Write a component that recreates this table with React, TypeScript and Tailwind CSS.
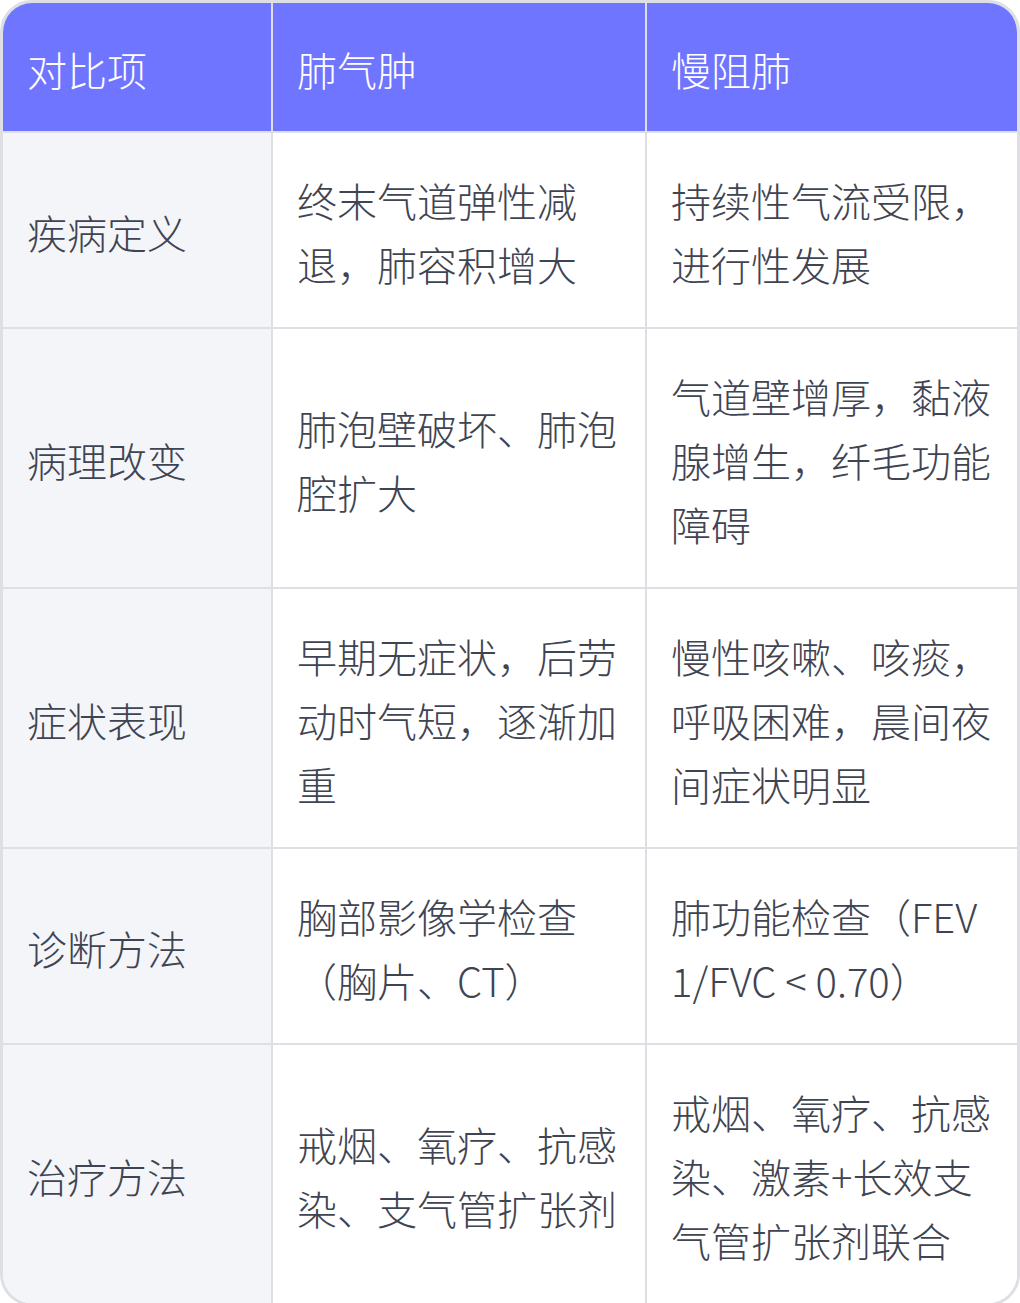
import React from 'react';

const rows = [
  {
    label: '疾病定义',
    a: '终末气道弹性减退，肺容积增大',
    b: '持续性气流受限，进行性发展',
  },
  {
    label: '病理改变',
    a: '肺泡壁破坏、肺泡腔扩大',
    b: '气道壁增厚，黏液腺增生，纤毛功能障碍',
  },
  {
    label: '症状表现',
    a: '早期无症状，后劳动时气短，逐渐加重',
    b: '慢性咳嗽、咳痰，呼吸困难，晨间夜间症状明显',
  },
  {
    label: '诊断方法',
    a: '胸部影像学检查（胸片、CT）',
    b: '肺功能检查（FEV1/FVC < 0.70）',
  },
  {
    label: '治疗方法',
    a: '戒烟、氧疗、抗感染、支气管扩张剂',
    b: '戒烟、氧疗、抗感染、激素+长效支气管扩张剂联合',
  },
];

const App: React.FC = () => {
  return (
    <div className="w-[1020px] h-[1303px] bg-white">
      <div
        className="grid grid-cols-[270px_374px_1fr] border-[3px] border-[#dedfe4] rounded-[32px] overflow-hidden text-[40px] leading-[64px] font-light"
        style={{ fontFamily: '"Noto Sans CJK SC", "Noto Sans", sans-serif' }}
      >
        {/* Header */}
        <div className="bg-[#7075ff] text-white px-6 pt-[34px] pb-[30px] border-r-2 border-b-2 border-[#dedfe4]">对比项</div>
        <div className="bg-[#7075ff] text-white px-6 pt-[34px] pb-[30px] border-r-2 border-b-2 border-[#dedfe4]">肺气肿</div>
        <div className="bg-[#7075ff] text-white px-6 pt-[34px] pb-[30px] border-b-2 border-[#dedfe4]">慢阻肺</div>

        {rows.map((row, i) => {
          const last = i === rows.length - 1;
          return (
            <React.Fragment key={row.label}>
              <div
                className={`bg-[#f4f5f9] text-[#3f4452] px-6 pt-[35px] pb-[31px] flex items-center border-r-2 border-[#dedfe4] ${last ? '' : 'border-b-2'}`}
              >
                {row.label}
              </div>
              <div
                className={`bg-white text-[#3f4452] px-6 pt-[35px] pb-[31px] flex items-center border-r-2 border-[#dedfe4] ${last ? '' : 'border-b-2'}`}
              >
                <span>{row.a}</span>
              </div>
              <div
                className={`bg-white text-[#3f4452] px-6 pt-[35px] pb-[31px] flex items-center break-all border-[#dedfe4] ${last ? '' : 'border-b-2'}`}
              >
                <span>{row.b}</span>
              </div>
            </React.Fragment>
          );
        })}
      </div>
    </div>
  );
};

export default App;
